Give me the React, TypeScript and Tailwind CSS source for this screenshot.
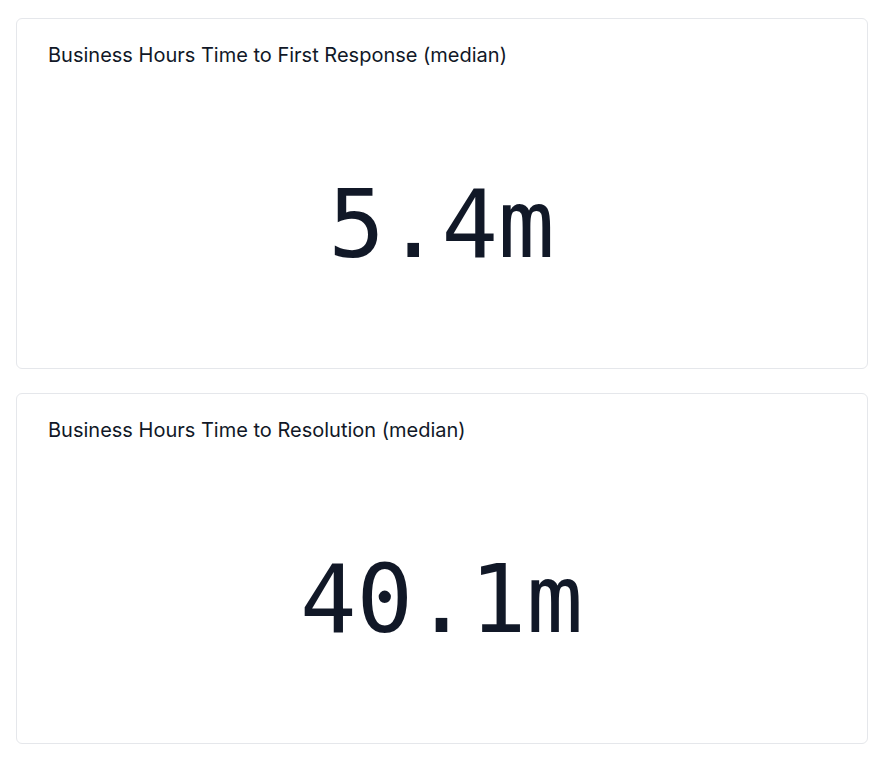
const metrics = [
  { title: "Business Hours Time to First Response (median)", value: "5.4m" },
  { title: "Business Hours Time to Resolution (median)", value: "40.1m" },
];

function MetricCard({ title, value }: { title: string; value: string }) {
  return (
    <div className="flex h-[351px] flex-col rounded-md border border-[#e5e7eb] bg-white pt-[22px] pr-8 pb-6 pl-[31px]">
      <h3 className="text-[20px] leading-7 font-normal text-[#111827] [font-family:Inter,'Noto_Sans',sans-serif]">
        {title}
      </h3>
      <div className="flex flex-1 items-center justify-center pt-[37px]">
        <span className="text-[94px] leading-none text-[#111827] [font-family:'DejaVu_Sans_Mono','Liberation_Mono',monospace]">
          {value}
        </span>
      </div>
    </div>
  );
}

export default function App() {
  return (
    <div className="min-h-screen bg-white px-4 pt-[18px]">
      <div className="flex w-[852px] flex-col gap-[24px]">
        {metrics.map((m) => (
          <MetricCard key={m.title} title={m.title} value={m.value} />
        ))}
      </div>
    </div>
  );
}
